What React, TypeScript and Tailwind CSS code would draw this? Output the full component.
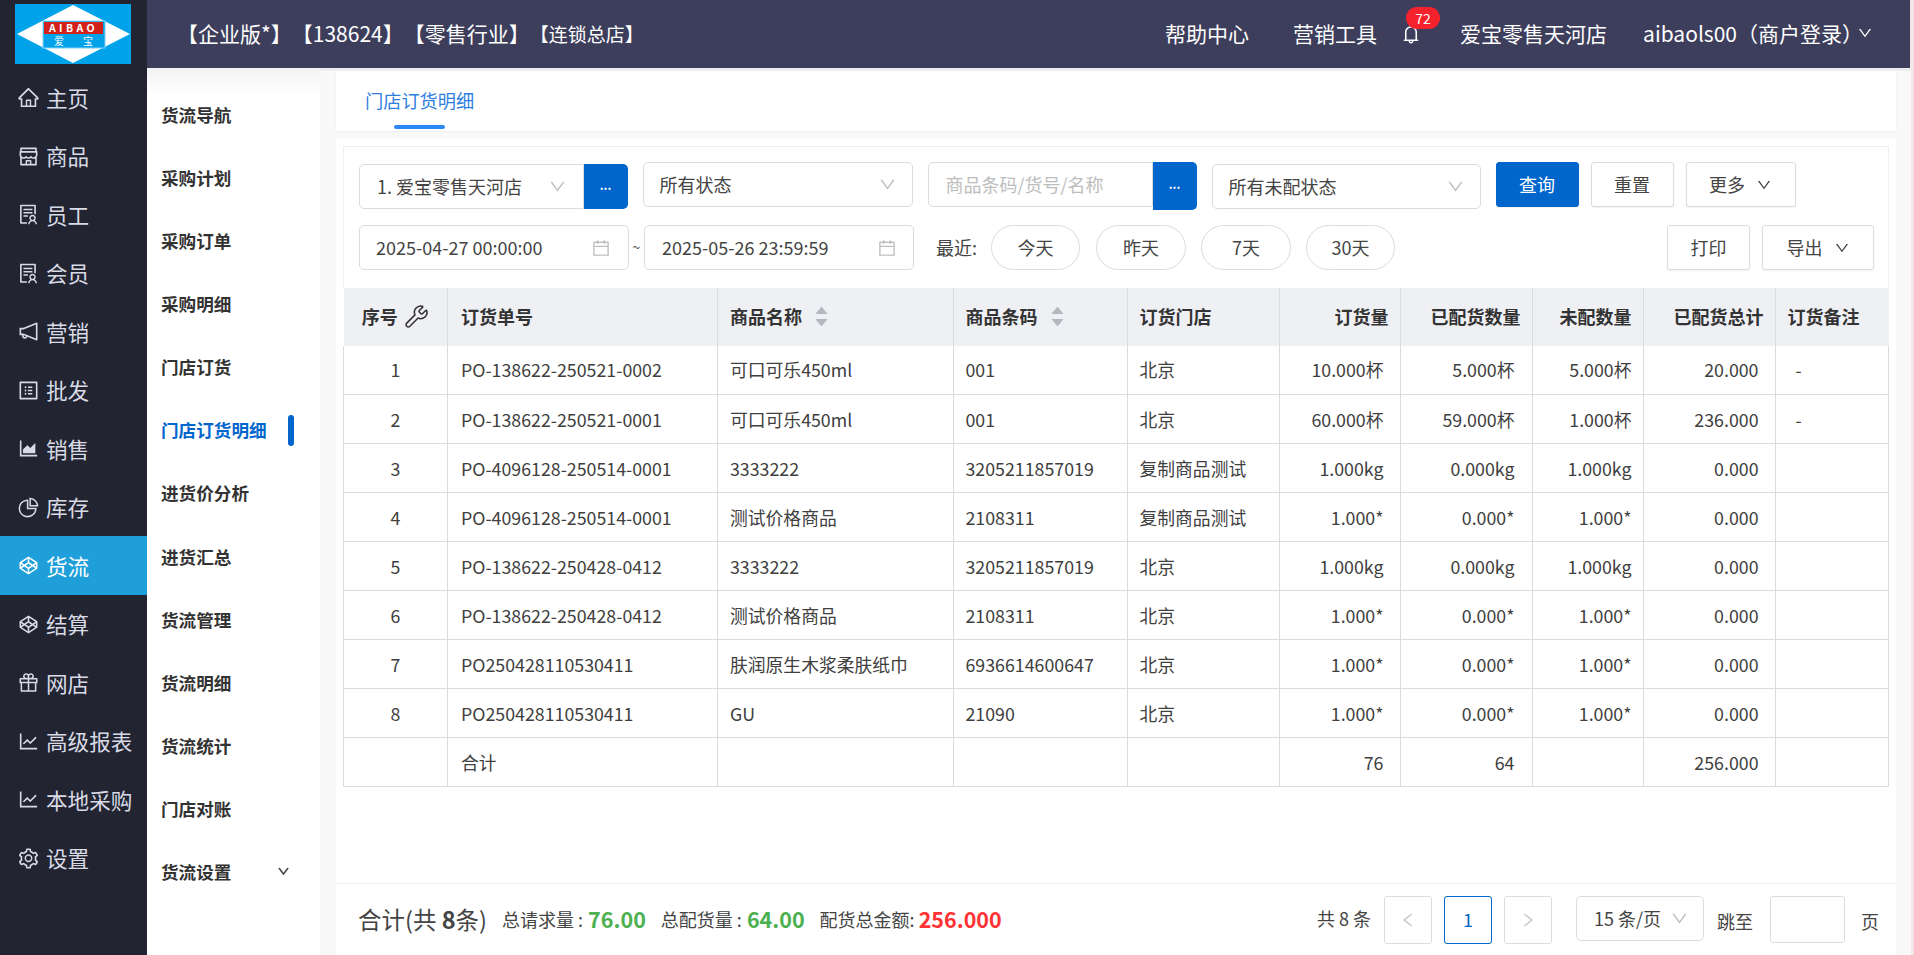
import type { ReactNode } from 'react';
import type { IconType } from 'react-icons';
import {
  AiOutlineHome,
  AiOutlineShop,
  AiOutlineSolution,
  AiOutlineNotification,
  AiOutlineProfile,
  AiOutlineAreaChart,
  AiOutlinePieChart,
  AiOutlineCodepen,
  AiOutlineGift,
  AiOutlineLineChart,
  AiOutlineSetting,
  AiOutlineBell,
  AiOutlineDown,
  AiOutlineCalendar,
  AiOutlineLeft,
  AiOutlineRight,
  AiFillCaretUp,
  AiFillCaretDown,
} from 'react-icons/ai';
import { Wrench } from 'lucide-react';

const MAIN_MENU: { label: string; icon: IconType; active?: boolean }[] = [
  { label: '主页', icon: AiOutlineHome },
  { label: '商品', icon: AiOutlineShop },
  { label: '员工', icon: AiOutlineSolution },
  { label: '会员', icon: AiOutlineSolution },
  { label: '营销', icon: AiOutlineNotification },
  { label: '批发', icon: AiOutlineProfile },
  { label: '销售', icon: AiOutlineAreaChart },
  { label: '库存', icon: AiOutlinePieChart },
  { label: '货流', icon: AiOutlineCodepen, active: true },
  { label: '结算', icon: AiOutlineCodepen },
  { label: '网店', icon: AiOutlineGift },
  { label: '高级报表', icon: AiOutlineLineChart },
  { label: '本地采购', icon: AiOutlineLineChart },
  { label: '设置', icon: AiOutlineSetting },
];

const SUB_MENU = [
  '货流导航',
  '采购计划',
  '采购订单',
  '采购明细',
  '门店订货',
  '门店订货明细',
  '进货价分析',
  '进货汇总',
  '货流管理',
  '货流明细',
  '货流统计',
  '门店对账',
  '货流设置',
];

const ROWS = [
  ['1', 'PO-138622-250521-0002', '可口可乐450ml', '001', '北京', '10.000杯', '5.000杯', '5.000杯', '20.000', '-'],
  ['2', 'PO-138622-250521-0001', '可口可乐450ml', '001', '北京', '60.000杯', '59.000杯', '1.000杯', '236.000', '-'],
  ['3', 'PO-4096128-250514-0001', '3333222', '3205211857019', '复制商品测试', '1.000kg', '0.000kg', '1.000kg', '0.000', ''],
  ['4', 'PO-4096128-250514-0001', '测试价格商品', '2108311', '复制商品测试', '1.000*', '0.000*', '1.000*', '0.000', ''],
  ['5', 'PO-138622-250428-0412', '3333222', '3205211857019', '北京', '1.000kg', '0.000kg', '1.000kg', '0.000', ''],
  ['6', 'PO-138622-250428-0412', '测试价格商品', '2108311', '北京', '1.000*', '0.000*', '1.000*', '0.000', ''],
  ['7', 'PO250428110530411', '肤润原生木浆柔肤纸巾', '6936614600647', '北京', '1.000*', '0.000*', '1.000*', '0.000', ''],
  ['8', 'PO250428110530411', 'GU', '21090', '北京', '1.000*', '0.000*', '1.000*', '0.000', ''],
  ['', '合计', '', '', '', '76', '64', '', '256.000', ''],
];

function Logo() {
  return (
    <svg viewBox="0 0 116 60" className="w-[116px] h-[60px]">
      <rect width="116" height="60" fill="#00a2e9" />
      <polygon points="2,30 58,1 115,30 58,59" fill="#fff" />
      <rect x="28" y="17" width="62" height="27" fill="#00a2e9" stroke="#7fd0f4" strokeWidth="1" />
      <rect x="29" y="18" width="59" height="12" fill="#d2211b" />
      <text x="58.5" y="28" textAnchor="middle" fontSize="10.5" fontWeight="700" letterSpacing="3.4" fill="#fff">AIBAO</text>
      <text x="44" y="41" textAnchor="middle" fontSize="10" fill="#fff">爱</text>
      <text x="73" y="41" textAnchor="middle" fontSize="10" fill="#fff">宝</text>
    </svg>
  );
}

function Sidebar() {
  return (
    <aside className="w-[147px] shrink-0 bg-[#222431] flex flex-col">
      <div className="h-[68px] pl-[15px] pt-[4px]">
        <Logo />
      </div>
      {MAIN_MENU.map((m) => {
        const Icon = m.icon;
        return (
          <div
            key={m.label}
            className={`h-[58.5px] flex items-center pl-[17px] pt-[1px] text-[21.6px] ${
              m.active ? 'bg-[#1e9fd9] text-white' : 'text-[#d8dbe6]'
            }`}
          >
            <Icon className="text-[23px] mr-[6px] shrink-0" />
            {m.label}
          </div>
        );
      })}
    </aside>
  );
}

function TopBar() {
  return (
    <header className="h-[68px] bg-[#3d3e5c] text-white flex items-center pl-[30px] shrink-0 [text-spacing-trim:space-all]">
      <span className="text-[21px]">【企业版*】【138624】【零售行业】</span>
      <span className="text-[19px]">【连锁总店】</span>
      <div className="ml-auto flex items-center text-[21px] pr-[37px]">
        <span>帮助中心</span>
        <span className="ml-[44px]">营销工具</span>
        <span className="relative ml-[23px] flex">
          <AiOutlineBell className="text-[22px]" />
          <span className="absolute left-[6px] top-[-16px] w-[34px] h-[22px] rounded-full bg-[#f5222d] text-[14px] leading-[22px] text-center">
            72
          </span>
        </span>
        <span className="ml-[38px]">爱宝零售天河店</span>
        <span className="ml-[36px]">aibaols00（商户登录）</span>
        <AiOutlineDown className="text-[16px] -ml-[6px] mb-[3px]" />
      </div>
    </header>
  );
}

function SubMenu() {
  return (
    <nav className="w-[173px] shrink-0 bg-white bg-gradient-to-b from-[#f2f2f4] to-white to-[3%] pt-[15.5px]">
      {SUB_MENU.map((s) => {
        const active = s === '门店订货明细';
        return (
          <div
            key={s}
            className={`relative h-[63.1px] flex items-center pl-[14px] text-[17.6px] font-bold ${
              active ? 'text-[#0066cc]' : 'text-[#333]'
            }`}
          >
            {s}
            {active && (
              <span className="absolute left-[141px] top-[16px] w-[6px] h-[31px] rounded-full bg-[#0066cc]" />
            )}
            {s === '货流设置' && <AiOutlineDown className="absolute left-[130px] top-[24px] text-[13px] stroke-[40]" />}
          </div>
        );
      })}
    </nav>
  );
}

function FieldBox({ className, children }: { className: string; children: ReactNode }) {
  return (
    <div className={`flex items-center border border-[#dcdcdc] rounded-[5px] bg-white text-[18px] text-[#444] ${className}`}>
      {children}
    </div>
  );
}

function Chevron({ className = '' }: { className?: string }) {
  return <AiOutlineDown className={`text-[19px] text-[#c0c0c0] ${className}`} />;
}

function MoreButton({ className = '' }: { className?: string }) {
  return (
    <div className={`w-[44px] bg-[#0066cc] text-white rounded-r-[5px] flex items-center justify-center text-[12px] font-bold leading-none pb-[4px] ${className}`}>
      ...
    </div>
  );
}

function Button({ className, children }: { className: string; children: ReactNode }) {
  return (
    <div className={`h-[45px] flex items-center justify-center rounded-[3px] text-[18px] border border-[#dcdcdc] bg-white text-[#444] shadow-[0_1px_2px_rgba(0,0,0,0.06)] ${className}`}>
      {children}
    </div>
  );
}

function Pill({ className, children }: { className: string; children: ReactNode }) {
  return (
    <div className={`h-[45px] flex items-center justify-center rounded-full border border-[#dcdcdc] text-[18px] text-[#444] ${className}`}>
      {children}
    </div>
  );
}

function Filters() {
  return (
    <div className="h-[142px] border border-b-0 border-[#f0f0f0] pl-[15px] pt-[15px]">
      <div className="flex items-start h-[48px]">
        <FieldBox className="w-[224.5px] h-[45px] mt-[2px] pl-[17px] pr-[16px] rounded-r-none">
          <span>1. 爱宝零售天河店</span>
          <Chevron className="ml-auto" />
        </FieldBox>
        <MoreButton className="h-[45px] mt-[2px]" />
        <FieldBox className="w-[270px] h-[45px] ml-[15px] pl-[16px] pr-[15px]">
          <span>所有状态</span>
          <Chevron className="ml-auto" />
        </FieldBox>
        <FieldBox className="w-[225px] h-[45px] ml-[15px] pl-[17px] rounded-r-none">
          <span className="text-[#bdbdbd]">商品条码/货号/名称</span>
        </FieldBox>
        <MoreButton className="h-[48px]" />
        <FieldBox className="w-[269px] h-[45px] mt-[2px] ml-[15px] pl-[16px] pr-[15px]">
          <span>所有未配状态</span>
          <Chevron className="ml-auto" />
        </FieldBox>
        <Button className="w-[83px] ml-[15px] !bg-[#0066cc] !border-[#0066cc] !text-white">查询</Button>
        <Button className="w-[83px] ml-[12px]">重置</Button>
        <Button className="w-[110px] ml-[12px]">
          更多
          <AiOutlineDown className="text-[16px] ml-[11px]" />
        </Button>
      </div>
      <div className="flex items-start h-[45px] mt-[15px]">
        <FieldBox className="w-[270px] h-[45px] pl-[16px] pr-[17px] rounded-[3px]">
          <span>2025-04-27 00:00:00</span>
          <AiOutlineCalendar className="ml-auto text-[20px] text-[#c0c0c0]" />
        </FieldBox>
        <span className="w-[15px] text-center text-[#555] text-[14px] leading-[45px]">~</span>
        <FieldBox className="w-[270px] h-[45px] pl-[17px] pr-[16px] rounded-[3px]">
          <span>2025-05-26 23:59:59</span>
          <AiOutlineCalendar className="ml-auto text-[20px] text-[#c0c0c0]" />
        </FieldBox>
        <span className="ml-[22px] w-[55px] text-[18px] text-[#444] leading-[45px]">最近:</span>
        <Pill className="w-[89px]">今天</Pill>
        <Pill className="w-[90px] ml-[16px]">昨天</Pill>
        <Pill className="w-[90px] ml-[15px]">7天</Pill>
        <Pill className="w-[89px] ml-[15px]">30天</Pill>
        <Button className="w-[83px] ml-[272px]">打印</Button>
        <Button className="w-[112px] ml-[12px]">
          导出
          <AiOutlineDown className="text-[16px] ml-[11px]" />
        </Button>
      </div>
    </div>
  );
}

function SortHead({ label }: { label: string }) {
  return (
    <span className="inline-flex items-center">
      {label}
      <span className="flex flex-col ml-[11px] text-[#b4b7bd] text-[17px] leading-none">
        <AiFillCaretUp className="-mb-[5px]" />
        <AiFillCaretDown />
      </span>
    </span>
  );
}

function OrderTable() {
  const head = 'h-[57.5px] border-r border-[#dcdcdc] bg-[#eff0f4] text-[18px] font-bold text-[#333]';
  const cell = 'h-[49px] border-r border-b border-[#dcdcdc] text-[17.8px] text-[#404040]';
  return (
    <table className="table-fixed w-[1545px] border-collapse">
      <colgroup>
        <col className="w-[104px]" />
        <col className="w-[270px]" />
        <col className="w-[235.5px]" />
        <col className="w-[174px]" />
        <col className="w-[152px]" />
        <col className="w-[121px]" />
        <col className="w-[132px]" />
        <col className="w-[111px]" />
        <col className="w-[132px]" />
        <col className="w-[113.5px]" />
      </colgroup>
      <thead>
        <tr>
          <th className={`${head} text-center`}>
            <span className="inline-flex items-center">
              序号
              <Wrench className="w-[25px] h-[25px] ml-[6px]" strokeWidth={1.5} />
            </span>
          </th>
          <th className={`${head} text-left pl-[13px]`}>订货单号</th>
          <th className={`${head} text-left pl-[12px]`}><SortHead label="商品名称" /></th>
          <th className={`${head} text-left pl-[12px]`}><SortHead label="商品条码" /></th>
          <th className={`${head} text-left pl-[12px]`}>订货门店</th>
          <th className={`${head} text-right pr-[11px]`}>订货量</th>
          <th className={`${head} text-right pr-[11px]`}>已配货数量</th>
          <th className={`${head} text-right pr-[11px]`}>未配数量</th>
          <th className={`${head} text-right pr-[11px]`}>已配货总计</th>
          <th className={`${head} text-left pl-[12px] border-r-0`}>订货备注</th>
        </tr>
      </thead>
      <tbody>
        {ROWS.map((r, i) => (
          <tr key={i}>
            <td className={`${cell} text-center border-l`}>{r[0]}</td>
            <td className={`${cell} pl-[13px]`}>{r[1]}</td>
            <td className={`${cell} pl-[12px]`}>{r[2]}</td>
            <td className={`${cell} pl-[12px]`}>{r[3]}</td>
            <td className={`${cell} pl-[12px]`}>{r[4]}</td>
            <td className={`${cell} text-right pr-[16px]`}>{r[5]}</td>
            <td className={`${cell} text-right pr-[17px]`}>{r[6]}</td>
            <td className={`${cell} text-right pr-[11px]`}>{r[7]}</td>
            <td className={`${cell} text-right pr-[16px]`}>{r[8]}</td>
            <td className={`${cell} pl-[20px]`}>{r[9]}</td>
          </tr>
        ))}
      </tbody>
    </table>
  );
}

function PageBox({ className, children }: { className: string; children?: ReactNode }) {
  return (
    <div className={`flex items-center justify-center border border-[#dcdcdc] rounded-[3px] ${className}`}>
      {children}
    </div>
  );
}

function Footer() {
  return (
    <footer className="mt-auto h-[72px] -mx-[7px] border-t border-[#eeeeee] flex items-center pl-[22px] pr-[17px] text-[#444]">
      <span className="text-[23.5px]">
        合计(共 <b className="font-bold">8</b>条)
      </span>
      <span className="ml-[15px] text-[18px]">总请求量 : </span>
      <b className="ml-[5px] text-[21.5px] font-bold text-[#4cb050]">76.00</b>
      <span className="ml-[15px] text-[18px]">总配货量 : </span>
      <b className="ml-[5px] text-[21.5px] font-bold text-[#4cb050]">64.00</b>
      <span className="ml-[15px] text-[18px]">配货总金额: </span>
      <b className="ml-[4px] text-[21.5px] font-bold text-[#ff3333]">256.000</b>

      <div className="ml-auto flex items-start text-[18px] h-[48px] pt-0">
        <span className="leading-[44px] mr-[13px]">共 8 条</span>
        <PageBox className="w-[48px] h-[48px]"><AiOutlineLeft className="text-[18px] text-[#c8c8c8]" /></PageBox>
        <PageBox className="w-[48px] h-[48px] ml-[12px] !border-[#0066cc] text-[#0066cc]">1</PageBox>
        <PageBox className="w-[48px] h-[48px] ml-[12px]"><AiOutlineRight className="text-[18px] text-[#c8c8c8]" /></PageBox>
        <FieldBox className="w-[128px] h-[45px] ml-[24px] pl-[17px] pr-[14px]">
          <span>15 条/页</span>
          <Chevron className="ml-auto" />
        </FieldBox>
        <span className="ml-[13px] leading-[50px]">跳至</span>
        <PageBox className="w-[75px] h-[47px] ml-[17px]" />
        <span className="ml-[16px] leading-[50px]">页</span>
      </div>
    </footer>
  );
}

export default function App() {
  return (
    <div className="w-[1914px] h-[955px] overflow-hidden flex bg-[#f4e6e8] font-['Noto_Sans_CJK_SC','Microsoft_YaHei',sans-serif]">
      <div className="w-[1910px] flex shrink-0">
        <Sidebar />
        <div className="flex-1 flex flex-col min-w-0">
          <TopBar />
          <div className="flex flex-1 min-h-0">
            <SubMenu />
            <main className="flex-1 bg-[#f9f9f9] pl-[16px] pr-[15px] pt-[3px] flex flex-col shadow-[inset_0_3px_0_#ececf0]">
              <div className="h-[60px] bg-white shadow-[0_1px_2px_rgba(0,0,0,0.05)] pl-[29px] shrink-0 relative">
                <div className="text-[18.2px] text-[#2f7fe0] leading-[58px]">门店订货明细</div>
                <span className="absolute left-[58px] top-[54px] w-[51px] h-[4px] rounded-full bg-[#2d88f5]" />
              </div>
              <div className="mt-[8px] flex-1 bg-white pt-[7px] px-[7px] flex flex-col min-h-0">
                <Filters />
                <OrderTable />
                <Footer />
              </div>
            </main>
          </div>
        </div>
      </div>
    </div>
  );
}
